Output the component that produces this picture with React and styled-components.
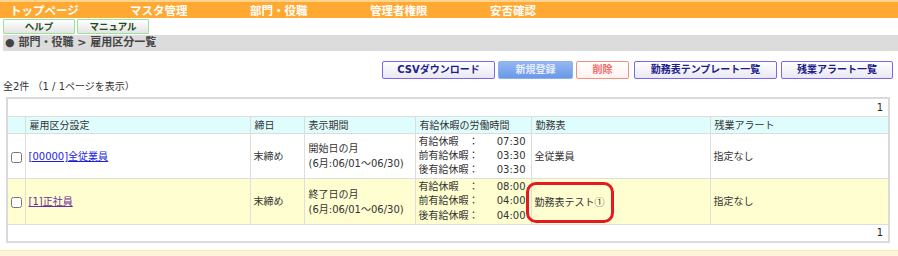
import React from "react";
import styled, { createGlobalStyle } from "styled-components";

const GlobalStyle = createGlobalStyle`
  html, body { margin: 0; padding: 0; background: #fff; }
  body {
    font-family: "DejaVu Sans", "Noto Sans CJK JP", sans-serif;
    font-size: 10px;
    color: #333;
  }
  * { box-sizing: border-box; }
`;

const Page = styled.div`
  width: 898px;
  display: flex;
  flex-direction: column;
`;

const NavBar = styled.nav`
  display: flex;
  height: 18px;
  background: #ffa933;
  border-top: 2px solid #ffd38c;
`;

const NavItem = styled.span`
  width: 120px;
  padding-left: 10px;
  color: #fff;
  font-family: "Noto Sans CJK JP", sans-serif;
  font-weight: bold;
  font-size: 11.5px;
  line-height: 16px;
  white-space: nowrap;
`;

const HelpRow = styled.div`
  display: flex;
  gap: 2px;
  padding-left: 3px;
  margin-top: 1px;
`;

const HelpButton = styled.button`
  width: 72px;
  height: 15px;
  padding: 0;
  border: 1px solid #98e398;
  border-radius: 1px;
  background: linear-gradient(#ffffff, #e4e4e4);
  color: #1f4a1f;
  font-family: "Noto Sans CJK JP", sans-serif;
  font-weight: bold;
  font-size: 9.5px;
  line-height: 13px;
`;

const Breadcrumb = styled.div`
  margin: 1px 0 0 3px;
  height: 16px;
  background: #dcdcdc;
  padding-left: 2px;
  color: #444;
  font-family: "DejaVu Sans", "Noto Sans CJK JP", sans-serif;
  font-weight: bold;
  font-size: 11px;
  line-height: 16px;
  white-space: pre;
`;

const Toolbar = styled.div`
  display: flex;
  justify-content: flex-end;
  gap: 3px;
  margin-top: 10px;
  padding-right: 5px;
`;

const ToolButton = styled.button`
  width: ${(p) => p.$w}px;
  height: 18px;
  padding: 0;
  margin-left: ${(p) => p.$ml || 0}px;
  border: 1px solid #7a68e8;
  border-radius: 2px;
  background: linear-gradient(#ffffff, #e9e7f3);
  color: #1d1d8a;
  font-family: "DejaVu Sans", "Noto Sans CJK JP", sans-serif;
  font-weight: bold;
  font-size: 10px;
  line-height: 16px;
  white-space: nowrap;
`;

const NewButton = styled(ToolButton)`
  border-color: #8fb0ec;
  background: linear-gradient(#93b7f4, #6b98e6);
  color: #e6edff;
`;

const DeleteButton = styled(ToolButton)`
  border-color: #f3917e;
  background: linear-gradient(#ffffff, #fff3f1);
  color: #f26a6a;
`;

const Count = styled.div`
  margin: 1px 0 0 3px;
  line-height: 14px;
  font-size: 10px;
  color: #333;
`;

const TableBox = styled.div`
  margin: 3px 8px 0 6px;
  border: 2px solid #dadada;
  display: flex;
  flex-direction: column;
`;

const Pager = styled.div`
  height: ${(p) => p.$h}px;
  line-height: ${(p) => p.$h}px;
  text-align: right;
  padding-right: 5px;
  font-size: 10px;
  color: #222;
`;

const Table = styled.table`
  width: 100%;
  border-collapse: collapse;
  table-layout: fixed;
`;

const HeadRow = styled.tr`
  height: 17px;
  background: #e0fdfd;
`;

const HeadCell = styled.th`
  width: ${(p) => p.$w}px;
  padding: 0 0 0 4px;
  border: 1px solid #dcdcdc;
  border-left: ${(p) => (p.$first ? "none" : "1px solid #dcdcdc")};
  border-right: ${(p) => (p.$last ? "none" : "1px solid #dcdcdc")};
  text-align: left;
  font-weight: normal;
  font-size: 10px;
  line-height: 15px;
  color: #333;
  white-space: nowrap;
`;

const BodyRow = styled.tr`
  height: ${(p) => p.$h}px;
  background: ${(p) => (p.$alt ? "#fefed0" : "#ffffff")};
`;

const Cell = styled.td`
  position: relative;
  padding: 0 ${(p) => (p.$pr ? p.$pr : 0)}px 0 ${(p) => (p.$pl ?? 3)}px;
  border: 1px solid #dedede;
  border-left: ${(p) => (p.$first ? "none" : "1px solid #dedede")};
  border-right: ${(p) => (p.$last ? "none" : "1px solid #dedede")};
  vertical-align: middle;
  font-size: 10px;
  line-height: 15px;
  color: #333;
  white-space: nowrap;
`;

const CheckCell = styled(Cell)`
  text-align: center;
  padding: 0 0 0 1px;
`;

const Check = styled.input`
  width: 11px;
  height: 11px;
  margin: 3px 0 0 0;
  vertical-align: top;
`;

const IdLink = styled.a`
  color: ${(p) => (p.$visited ? "#6b2f9c" : "#1e1ee0")};
  text-decoration: underline;
  font-size: 10px;
`;

const Lines = styled.div`
  display: flex;
  flex-direction: column;
  line-height: ${(p) => p.$lh}px;
`;

const LeaveGrid = styled.div`
  display: grid;
  grid-template-columns: 1fr auto;
  line-height: 14.3px;
`;

const LeaveValue = styled.span`
  text-align: right;
`;

const SheetName = styled.span`
  font-family: "Noto Sans CJK JP", sans-serif;
`;

const Marker = styled.div`
  position: absolute;
  left: -6px;
  top: 3px;
  width: 88px;
  height: 41px;
  border: 3px solid #e6191f;
  border-radius: 10px;
  pointer-events: none;
`;

const Footer = styled.div`
  margin-top: 7px;
  height: 10px;
  background: #fff6d9;
  border-top: 1px solid #ffe6ae;
`;

const columns = [
  { label: "", w: 17 },
  { label: "雇用区分設定", w: 225 },
  { label: "締日", w: 54 },
  { label: "表示期間", w: 111 },
  { label: "有給休暇の労働時間", w: 116 },
  { label: "勤務表", w: 179 },
  { label: "残業アラート", w: 178 },
];

const rows = [
  {
    id: "[00000]全従業員",
    visited: false,
    close: "末締め",
    period: ["開始日の月", "(6月:06/01～06/30)"],
    leave: ["07:30", "03:30", "03:30"],
    sheet: "全従業員",
    alert: "指定なし",
    h: 45,
  },
  {
    id: "[1]正社員",
    visited: true,
    close: "末締め",
    period: ["終了日の月", "(6月:06/01～06/30)"],
    leave: ["08:00", "04:00", "04:00"],
    sheet: "勤務表テスト①",
    alert: "指定なし",
    marked: true,
    h: 46,
  },
];

const leaveLabels = ["有給休暇　：", "前有給休暇：", "後有給休暇："];

export default function App() {
  return (
    <Page>
      <GlobalStyle />
      <NavBar>
        <NavItem>トップページ</NavItem>
        <NavItem>マスタ管理</NavItem>
        <NavItem>部門・役職</NavItem>
        <NavItem>管理者権限</NavItem>
        <NavItem>安否確認</NavItem>
      </NavBar>
      <HelpRow>
        <HelpButton>ヘルプ</HelpButton>
        <HelpButton>マニュアル</HelpButton>
      </HelpRow>
      <Breadcrumb>● 部門・役職 &gt; 雇用区分一覧</Breadcrumb>
      <Toolbar>
        <ToolButton $w={113}>CSVダウンロード</ToolButton>
        <NewButton $w={75}>新規登録</NewButton>
        <DeleteButton $w={53}>削除</DeleteButton>
        <ToolButton $w={143} $ml={2}>勤務表テンプレート一覧</ToolButton>
        <ToolButton $w={112} $ml={1}>残業アラート一覧</ToolButton>
      </Toolbar>
      <Count>全2件 （1 / 1ページを表示）</Count>
      <TableBox>
        <Pager $h={17}>1</Pager>
        <Table>
          <thead>
            <HeadRow>
              {columns.map((c, i) => (
                <HeadCell key={i} $w={c.w} $first={i === 0} $last={i === columns.length - 1}>
                  {c.label}
                </HeadCell>
              ))}
            </HeadRow>
          </thead>
          <tbody>
            {rows.map((r, i) => (
              <BodyRow key={i} $h={r.h} $alt={i % 2 === 1}>
                <CheckCell $first>
                  <Check type="checkbox" />
                </CheckCell>
                <Cell $pl={3}>
                  <IdLink href="#" $visited={r.visited}>{r.id}</IdLink>
                </Cell>
                <Cell $pl={3}>{r.close}</Cell>
                <Cell $pl={4}>
                  <Lines $lh={15}>
                    {r.period.map((p) => (
                      <span key={p}>{p}</span>
                    ))}
                  </Lines>
                </Cell>
                <Cell $pl={3} $pr={5}>
                  <LeaveGrid>
                    {leaveLabels.map((l, k) => (
                      <React.Fragment key={l}>
                        <span>{l}</span>
                        <LeaveValue>{r.leave[k]}</LeaveValue>
                      </React.Fragment>
                    ))}
                  </LeaveGrid>
                </Cell>
                <Cell $pl={3}>
                  <SheetName>{r.sheet}</SheetName>
                  {r.marked && <Marker />}
                </Cell>
                <Cell $pl={3} $last>{r.alert}</Cell>
              </BodyRow>
            ))}
          </tbody>
        </Table>
        <Pager $h={16}>1</Pager>
      </TableBox>
      <Footer />
    </Page>
  );
}
